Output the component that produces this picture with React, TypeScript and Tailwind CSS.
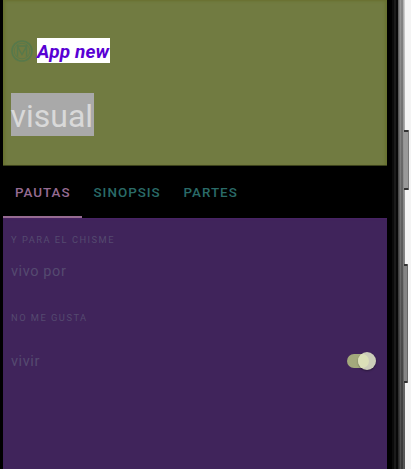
import React from 'react';

function Badge() {
  return (
    <svg className="h-[22px] w-[22px] shrink-0" viewBox="0 0 22 22" fill="none" stroke="#57794b" strokeWidth="1.6">
      <circle cx="11" cy="11" r="10" />
      <circle cx="11" cy="11" r="7.8" strokeWidth="0.8" />
      <path d="M6.5 16.5V6.5L11 14.5L15.5 6.5V16.5M6 6H16" strokeWidth="1.4" />
    </svg>
  );
}

function Toggle() {
  return (
    <div className="relative flex h-5 w-[29px] items-center">
      <div className="h-[14px] w-6 rounded-full bg-[#a3a97c]" />
      <div className="absolute right-0 top-[1px] h-[18px] w-[18px] overflow-hidden rounded-full bg-[#cccdb9] shadow-[0_1px_2px_rgba(0,0,0,0.35)]">
        <div className="mt-[2px] -ml-[13px] h-[14px] w-6 rounded-full bg-[#dbe0b8]" />
      </div>
    </div>
  );
}

function Bezel() {
  return (
    <div className="relative flex w-6 shrink-0 bg-[#f4f4f4]">
      <div className="w-[5px] bg-black" />
      <div className="w-[2px] bg-[#0b0b0b]" />
      <div className="w-[2px] bg-[#1b1b1b]" />
      <div className="w-[2px] bg-[#090909]" />
      <div className="w-px bg-gradient-to-b from-[#666] to-[#252525]" />
      <div className="w-px bg-gradient-to-b from-[#858585] to-[#353535]" />
      <div className="w-px bg-gradient-to-b from-[#969696] to-[#4b4b4b]" />
      <div className="w-[2px] bg-gradient-to-b from-[#858585] to-[#363636]" />
      <div className="w-px bg-gradient-to-b from-[#b0b0b0] to-[#555]" />
      <div className="w-px bg-gradient-to-b from-[#d0d0d0] via-[#8a8a8a] to-[#505050]" />
      <div className="absolute left-[17px] top-[130px] h-[60px] w-[5px] rounded-r-[1px] border-y-2 border-r border-y-[#333] border-r-[#777] bg-[#999]" />
      <div className="absolute left-[17px] top-[264px] h-[119px] w-[4px] rounded-r-[1px] border-y-2 border-r border-y-[#333] border-r-[#666] bg-[#858585]" />
    </div>
  );
}

export default function App() {
  return (
    <div className="flex h-[469px] w-[411px] overflow-hidden bg-black font-[Roboto,sans-serif]">
      <main className="ml-[3px] flex w-[384px] shrink-0 flex-col">
        <header className="h-[166px] border-b border-[#3b421c] bg-[#717b41] pl-[7.5px] pt-[38px] shadow-[inset_4px_0_3px_-2px_#68722f,inset_-4px_0_3px_-2px_#68722f,inset_0_3px_3px_-2px_#68722f]">
          <div className="flex h-[25px] items-center">
            <Badge />
            <span className="ml-[4.5px] flex h-[25px] w-[73px] items-center whitespace-nowrap bg-white text-[19px] font-bold italic tracking-[0.12px] text-[#5800d4]">
              <span className="pt-[3px]">App new</span>
            </span>
          </div>
          <h1 className="mt-[30px] flex h-[43px] w-[83.5px] items-center whitespace-nowrap bg-[#a9a9a9] text-[32px] leading-[43px] text-[#d9d9d9]">
            <span className="pt-[3px]">visual</span>
          </h1>
        </header>
        <nav className="flex h-[52px] bg-black text-[13.4px] font-medium leading-[53px] tracking-[1px] text-[#2a6b68]">
          <span className="w-[79px] border-b-2 border-[#966b92] pl-3 text-[#966b92]">PAUTAS</span>
          <span className="ml-[11.5px] w-[90px]">SINOPSIS</span>
          <span>PARTES</span>
        </nav>
        <section className="flex-1 bg-[#40245b] pl-2 pr-[11px] text-[#554a70] shadow-[inset_0_2px_2px_-1px_#4a2466]">
          <h2 className="pt-[14px] text-[9.3px] leading-4 tracking-[1.5px]">Y PARA EL CHISME</h2>
          <p className="mt-[14px] text-[14.5px] leading-5 tracking-[0.6px]">vivo por</p>
          <h2 className="mt-[28px] text-[9.3px] leading-4 tracking-[1.5px]">NO ME GUSTA</h2>
          <div className="mt-[25px] flex h-5 items-center justify-between">
            <p className="pt-[1px] text-[14.5px] leading-5 tracking-[0.6px]">vivir</p>
            <Toggle />
          </div>
        </section>
      </main>
      <Bezel />
    </div>
  );
}
